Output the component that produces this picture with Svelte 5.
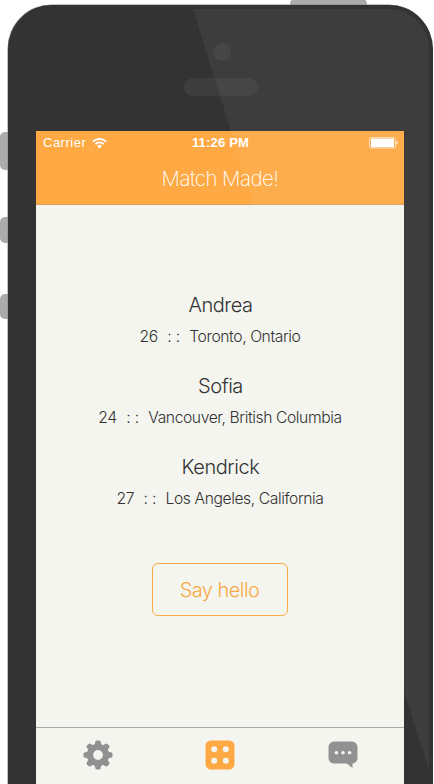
<script>
  const matches = [
    { name: 'Andrea', age: 26, place: 'Toronto, Ontario' },
    { name: 'Sofia', age: 24, place: 'Vancouver, British Columbia' },
    { name: 'Kendrick', age: 27, place: 'Los Angeles, California' }
  ];
  const teeth = [0, 45, 90, 135, 180, 225, 270, 315];
</script>

<div class="stage">
  <i class="key power"></i>
  <i class="key mute"></i>
  <i class="key up"></i>
  <i class="key down"></i>
  <div class="phone">
    <div class="bezel">
      <i class="camera"></i>
      <i class="speaker"></i>
    </div>
    <main class="screen">
      <header>
        <div class="status">
          <div class="carrier">
            <span>Carrier</span>
            <svg width="15" height="12" viewBox="0 0 14 11" fill="none" stroke="#fff">
              <path d="M.8 4.3a8.8 8.8 0 0 1 12.4 0" stroke-width="1.7" />
              <path d="M3 6.5a5.7 5.7 0 0 1 8 0" stroke-width="1.6" />
              <path d="M4.8 8.3a3.1 3.1 0 0 1 4.4 0L7 10.6z" fill="#fff" stroke="none" />
            </svg>
          </div>
          <time>11:26 PM</time>
          <svg class="battery" width="29" height="12" viewBox="0 0 29 12">
            <rect x=".5" y=".5" width="26" height="10.6" rx="1.5" fill="none" stroke="#fff" stroke-opacity=".75" stroke-width=".8" />
            <rect x="2" y="1.5" width="23" height="8.8" rx=".5" fill="#fff" />
            <path d="M27.3 4c1.7.7 1.7 3 0 3.7z" fill="#fff" />
          </svg>
        </div>
        <h1>Match Made!</h1>
      </header>
      <section>
        {#each matches as m}
          <article>
            <h2>{m.name}</h2>
            <p><span>{m.age}</span><span class="dots">: :</span><span>{m.place}</span></p>
          </article>
        {/each}
        <button>Say hello</button>
      </section>
      <nav>
        <svg width="30" height="30" viewBox="-15 -15 30 30" fill="#919191">
          <path fill-rule="evenodd" d="M0-11A11 11 0 1 1 0 11A11 11 0 1 1 0-11ZM0-4.9A4.9 4.9 0 1 0 0 4.9A4.9 4.9 0 1 0 0-4.9Z" />
          {#each teeth as angle}
            <path transform="rotate({angle})" d="M-4.2-9.5C-3-11-2.9-12-2.6-13.4Q-2.3-14.5-1.2-14.5H1.2Q2.3-14.5 2.6-13.4C2.9-12 3-11 4.2-9.5Z" />
          {/each}
        </svg>
        <svg width="30" height="30" viewBox="0 0 30 30">
          <rect x=".5" y=".5" width="29" height="29" rx="5.5" fill="#fea944" />
          <g fill="#f4f5ef">
            <circle cx="9.2" cy="9.2" r="3" /><circle cx="20.8" cy="9.2" r="3" />
            <circle cx="9.2" cy="20.8" r="3" /><circle cx="20.8" cy="20.8" r="3" />
          </g>
        </svg>
        <svg width="30" height="30" viewBox="0 0 30 30">
          <path fill="#919191" d="M6 1.6h18a5.5 5.5 0 0 1 5.5 5.5v11a5.5 5.5 0 0 1-5 5.5v4.5l-5.7-4.5H6a5.5 5.5 0 0 1-5.5-5.5v-11A5.5 5.5 0 0 1 6 1.6Z" />
          <g fill="#f4f5ef">
            <circle cx="8.4" cy="12.7" r="1.8" /><circle cx="15" cy="12.7" r="1.8" /><circle cx="21.6" cy="12.7" r="1.8" />
          </g>
        </svg>
      </nav>
    </main>
  </div>
  <svg class="glare" width="434" height="784" viewBox="0 0 434 784">
    <path d="M193 9H389A40 40 0 0 1 429 49V771L404 691V205H254Z" fill="#fff" fill-opacity=".05" />
  </svg>
</div>

<style>
  .stage {
    position: relative;
    width: 434px;
    height: 784px;
    overflow: hidden;
    background: #fff;
    font-family: Inter, "Liberation Sans", sans-serif;
    display: flex;
  }
  .phone {
    position: relative;
    box-sizing: border-box;
    width: 425px;
    height: 860px;
    margin: 5px 0 0 8px;
    flex: none;
    border-radius: 44px;
    background: #333;
    box-shadow: -0.5px -0.5px 0 0 #888;
  }
  .key { position: absolute; background: #ababab; }
  .power { left: 290px; top: -2px; width: 77px; height: 12px; border-radius: 7px; }
  .mute { left: 0; top: 132px; width: 14px; height: 38px; border-radius: 5px; }
  .up { left: 0; top: 217px; width: 14px; height: 26px; border-radius: 5px; }
  .down { left: 0; top: 294px; width: 14px; height: 25px; border-radius: 5px; }
  .bezel {
    height: 126px;
    box-sizing: border-box;
    padding: 38px 0 0 176px;
    display: flex;
    flex-direction: column;
    gap: 17px;
  }
  .camera { width: 18px; height: 18px; border-radius: 50%; background: #3d3d3d; margin-left: 29px; }
  .speaker { width: 74px; height: 17.5px; border-radius: 9px; background: #3d3d3d; }
  .screen {
    width: 368px;
    height: 653px;
    margin-left: 28px;
    display: flex;
    flex-direction: column;
    background: #f4f5ef;
    color: #333;
  }
  header {
    box-sizing: border-box;
    height: 74px;
    background: #fea944;
    border-bottom: 1px solid #d6a15c;
    color: #fff;
  }
  .status {
    height: 24px;
    padding: 0 6px 0 7px;
    display: grid;
    grid-template-columns: 1fr auto 1fr;
    align-items: center;
    font: 13px/24px "Liberation Sans", sans-serif;
  }
  .carrier { display: flex; align-items: center; gap: 6px; letter-spacing: 0.5px; }
  time { font-weight: 700; letter-spacing: 0.2px; }
  .battery { justify-self: end; }
  h1, h2, p { margin: 0; font-weight: 300; text-align: center; }
  h1 { font-size: 20.5px; line-height: 48px; font-weight: 200; letter-spacing: -0.55px; }
  section {
    flex: 1;
    display: flex;
    flex-direction: column;
    align-items: center;
    padding-top: 85px;
  }
  article { height: 81px; }
  h2 { font-size: 20px; line-height: 30px; letter-spacing: -0.45px; padding-left: 1px; }
  p {
    display: flex;
    justify-content: center;
    gap: 9.5px;
    font-size: 15.7px;
    line-height: 33px;
    letter-spacing: -0.42px;
    white-space: nowrap;
  }
  .dots { word-spacing: 0.5px; }
  button {
    box-sizing: border-box;
    width: 136px;
    height: 53px;
    margin-top: 30px;
    padding: 0 1px 0 0;
    border: 1.5px solid #f9a945;
    border-radius: 6px;
    background: none;
    color: #f9a945;
    font: 300 20px/50px Inter, sans-serif;
    letter-spacing: -0.55px;
  }
  nav {
    box-sizing: border-box;
    height: 57px;
    border-top: 1px solid #aaa;
    padding: 0 46.5px 2px;
    display: flex;
    justify-content: space-between;
    align-items: center;
  }
  .glare { position: absolute; left: 0; top: 0; pointer-events: none; }
</style>
